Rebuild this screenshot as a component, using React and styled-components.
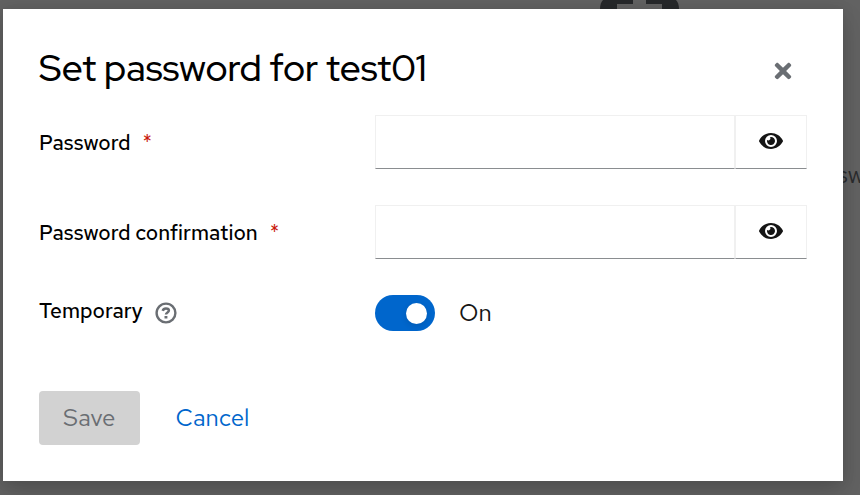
import React, { useId, useState } from "react";
import styled, { createGlobalStyle } from "styled-components";
import { FaEye, FaTimes } from "react-icons/fa";

const GlobalStyle = createGlobalStyle`
  * { box-sizing: border-box; }
  body {
    margin: 0;
    background: #626262;
    color: #151515;
    font-family: "Red Hat Text", Lato, "Liberation Sans", sans-serif;
    font-size: 24px;
    line-height: 36px;
    overflow: hidden;
  }
  button, input { font: inherit; }
`;

const Page = styled.div`
  position: relative;
  min-height: 100vh;
  padding: 9px 17px 14px 3px;
  overflow: hidden;
`;

const EmptyStateIcon = styled.svg`
  position: absolute;
  top: 0;
  left: 600px;
  width: 79px;
  height: 12px;
`;

const BackdropText = styled.span`
  position: absolute;
  top: 157px;
  left: 837px;
  color: #2b2c2e;
  white-space: nowrap;
`;

const Dialog = styled.section`
  position: relative;
  padding: 36px;
  background: #fff;
  box-shadow: 0 12px 24px rgba(3, 3, 3, 0.16), 0 0 12px rgba(3, 3, 3, 0.1);
`;

const Header = styled.header`
  display: flex;
  align-items: flex-start;
  justify-content: space-between;
  height: 48px;
  margin-bottom: 22px;
`;

const Title = styled.h1`
  margin: 0;
  color: #000;
  font-family: "Red Hat Display", Lato, "Liberation Sans", sans-serif;
  font-size: 37px;
  font-weight: 500;
  line-height: 46px;
`;

const IconButton = styled.button`
  display: grid;
  place-items: center;
  padding: 0;
  border: 0;
  background: transparent;
  color: #6a6e73;
  cursor: pointer;
`;

const CloseButton = styled(IconButton)`
  width: 48px;
  height: 52px;
`;

const HelpButton = styled(IconButton)`
  height: 36px;
`;

const Form = styled.form`
  display: grid;
  gap: 36px;
`;

const Row = styled.div`
  display: grid;
  grid-template-columns: 7fr 9fr;
  align-items: start;
`;

const LabelCell = styled.div`
  display: flex;
  align-items: flex-start;
  gap: 12px;
  padding-top: ${({ $inset }) => ($inset ? "12px" : "0")};
  font-size: 21px;
  line-height: 32px;
`;

const Label = styled.label`
  color: #000;
  font-weight: 500;
`;

const Required = styled.span`
  color: #c9190b;
`;

const InputGroup = styled.div`
  display: grid;
  grid-template-columns: 1fr 72px;
  height: 54px;
`;

const PasswordInput = styled.input`
  min-width: 0;
  padding: 0 12px;
  border: 1px solid #f0f0f0;
  border-bottom-color: #8a8d90;
  border-radius: 0;
  outline: 0;
`;

const RevealButton = styled(IconButton)`
  padding-bottom: 2px;
  border: 1px solid #f0f0f0;
  border-bottom-color: #8a8d90;
  color: #151515;
`;

const Switch = styled.label`
  display: flex;
  align-items: center;
  gap: 24px;
`;

const SwitchInput = styled.input`
  display: flex;
  align-items: center;
  appearance: none;
  width: 60px;
  height: 36px;
  margin: 0;
  padding: 0 8px;
  border-radius: 18px;
  background: #8a8d90;
  cursor: pointer;

  &::before {
    content: "";
    width: 21px;
    height: 21px;
    border-radius: 50%;
    background: #fff;
    box-shadow: 0 2px 6px rgba(3, 3, 3, 0.12);
  }
  &:checked {
    justify-content: flex-end;
    background: #06c;
  }
`;

const Footer = styled.footer`
  display: flex;
  gap: 12px;
  padding-top: 60px;
`;

const Button = styled.button`
  height: 54px;
  padding: 0 24px;
  border: 0;
  border-radius: 4px;
  background: transparent;
  color: #06c;
  cursor: pointer;

  &:disabled {
    background: #d2d2d2;
    color: #6a6e73;
    cursor: default;
  }
`;

function HelpIcon() {
  return (
    <svg width="22" height="22" viewBox="0 0 22 22" fill="none" stroke="currentColor" aria-hidden="true">
      <circle cx="11" cy="11" r="9.400" strokeWidth="2.400" />
      <path d="M7.700 8.800C8.200 7.100 9.300 6.400 10.900 6.400c1.800 0 3 .8 3 2.200 0 1.900-2.900 1.800-2.900 3.900" strokeWidth="2.500" />
      <path d="M9.500 14h2.900v2.500H9.500z" fill="currentColor" stroke="none" />
    </svg>
  );
}

function PasswordField({ label }) {
  const id = useId();
  const [visible, setVisible] = useState(false);
  return (
    <Row>
      <LabelCell $inset>
        <Label htmlFor={id}>{label}</Label>
        <Required aria-hidden="true">*</Required>
      </LabelCell>
      <InputGroup>
        <PasswordInput id={id} type={visible ? "text" : "password"} required />
        <RevealButton type="button" aria-label={`Show ${label}`} onClick={() => setVisible(!visible)}>
          <FaEye size={24} />
        </RevealButton>
      </InputGroup>
    </Row>
  );
}

export default function App() {
  const [temporary, setTemporary] = useState(true);
  return (
    <Page>
      <GlobalStyle />
      <EmptyStateIcon viewBox="0 0 79 12" aria-hidden="true">
        <path d="M0 12V9C0 5 1 2 3 0H33V4H17V12ZM46 0H76C78 2 79 5 79 9V12H62V4H46Z" fill="#27292b" />
      </EmptyStateIcon>
      <BackdropText>sw</BackdropText>
      <Dialog role="dialog" aria-labelledby="dialog-title">
        <Header>
          <Title id="dialog-title">Set password for test01</Title>
          <CloseButton type="button" aria-label="Close">
            <FaTimes size={24} />
          </CloseButton>
        </Header>
        <Form id="password-form" onSubmit={(event) => event.preventDefault()}>
          <PasswordField label="Password" />
          <PasswordField label="Password confirmation" />
          <Row>
            <LabelCell>
              <Label htmlFor="temporary">Temporary</Label>
              <HelpButton type="button" aria-label="Help for Temporary">
                <HelpIcon />
              </HelpButton>
            </LabelCell>
            <Switch>
              <SwitchInput
                id="temporary"
                type="checkbox"
                role="switch"
                checked={temporary}
                onChange={() => setTemporary(!temporary)}
              />
              {temporary ? "On" : "Off"}
            </Switch>
          </Row>
        </Form>
        <Footer>
          <Button type="submit" form="password-form" disabled>Save</Button>
          <Button type="button">Cancel</Button>
        </Footer>
      </Dialog>
    </Page>
  );
}
